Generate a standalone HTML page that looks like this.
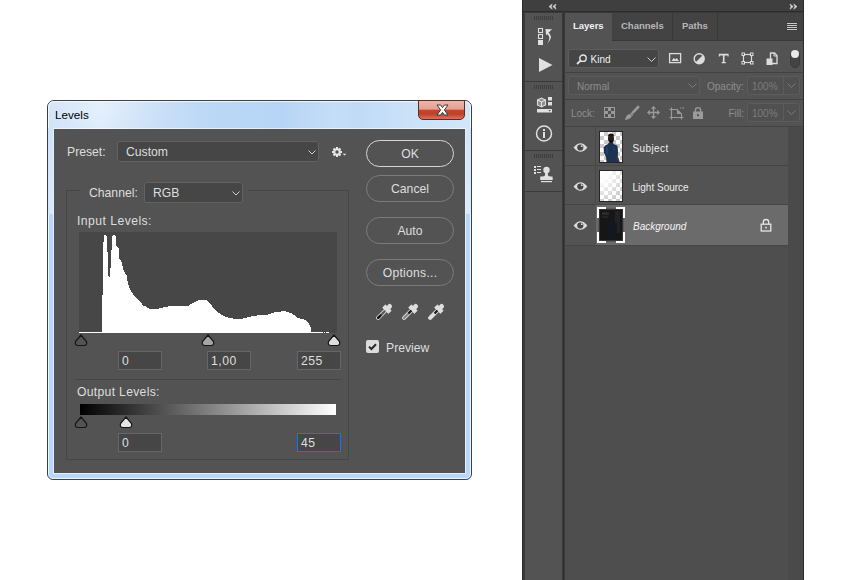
<!DOCTYPE html>
<html><head><meta charset="utf-8">
<style>
*{margin:0;padding:0;box-sizing:border-box}
html,body{width:850px;height:580px;overflow:hidden;background:#fff;font-family:"Liberation Sans",sans-serif}
.a{position:absolute}
.t{position:absolute;white-space:nowrap;line-height:16px;color:#dedede;font-size:12.2px}
.lt{position:absolute;white-space:nowrap;line-height:16px;font-size:10px;color:#e0e0e0}
</style></head><body>

<!-- ============ LEVELS DIALOG ============ -->
<div class="a" style="left:47px;top:100px;width:425px;height:380px;border:1px solid #3a3f47;border-radius:7px 7px 6px 6px;background:#b9d7fa;overflow:hidden">
  <!-- title bar gradient -->
  <div class="a" style="left:0;top:0;width:423px;height:28px;background:linear-gradient(90deg,#cfe2f8 0%,#d5e7fa 8%,#dcebfb 12%,#cde1f8 22%,#bcd8f6 38%,#b6d5f6 55%,#c5ddf7 68%,#c0daf7 73%,#cde3f9 88%,#d3e6f9 100%)"></div>
  <div class="a" style="left:-30px;top:-30px;width:160px;height:70px;border-radius:50%;background:radial-gradient(ellipse at center,rgba(255,255,255,.25) 0%,rgba(255,255,255,0) 70%)"></div>
  <div class="a" style="left:0;top:0;width:423px;height:378px;border:1px solid rgba(255,255,255,.75);border-radius:6px 6px 5px 5px"></div>
</div>
<div class="t" style="left:55px;top:107px;color:#000;font-size:11.7px">Levels</div>
<!-- close button -->
<div class="a" style="left:418px;top:100px;width:47px;height:20px;border:1px solid #5e2a24;border-radius:0 0 5px 5px;background:linear-gradient(180deg,#ecb6ab 0%,#e6a092 45%,#c8432f 52%,#c03f2b 72%,#d67360 100%)"></div>
<svg class="a" style="left:434px;top:103px" width="17" height="14" viewBox="0 0 17 14"><path d="M3 2 L6.6 2 L8.5 4.6 L10.4 2 L14 2 L10.4 7 L14 12 L10.4 12 L8.5 9.4 L6.6 12 L3 12 L6.6 7 Z" fill="#fff" stroke="#3b3b3b" stroke-width="1" stroke-linejoin="round"/></svg>

<div class="a" style="left:48px;top:128px;width:5px;height:86px;background:linear-gradient(180deg,#cfe3f9,#d8e9fb)"></div>
<div class="a" style="left:466px;top:128px;width:5px;height:86px;background:linear-gradient(180deg,#d2e5f9,#dcebfb)"></div>
<!-- content -->
<div class="a" style="left:53px;top:128px;width:413px;height:346px;background:#fff;opacity:.6"></div>
<div class="a" style="left:54px;top:129px;width:411px;height:344px;background:#535353"></div>

<!-- Preset -->
<div class="t" style="left:67px;top:143.5px">Preset:</div>
<div class="a" style="left:117px;top:141px;width:202px;height:21px;background:#464646;border:1px solid #626262;border-radius:3px"></div>
<div class="t" style="left:126px;top:143.5px">Custom</div>
<svg class="a" style="left:307.5px;top:149.5px" width="9" height="6"><path d="M0.5 0.5 L4 4 L7.5 0.5" fill="none" stroke="#cfcfcf" stroke-width="1"/></svg>
<!-- gear -->
<svg class="a" style="left:331px;top:146px" width="18" height="12" viewBox="0 0 18 12">
  <g fill="#e6e6e6">
    <circle cx="6" cy="6" r="3.7"/>
    <rect x="5" y="1" width="2" height="10"/>
    <rect x="1" y="5" width="10" height="2"/>
    <rect x="5" y="1" width="2" height="10" transform="rotate(45 6 6)"/>
    <rect x="5" y="1" width="2" height="10" transform="rotate(-45 6 6)"/>
  </g>
  <circle cx="6" cy="6" r="1.7" fill="#535353"/>
  <path d="M11.5 7.8 L15.5 7.8 L13.5 9.6 Z" fill="#e6e6e6"/>
</svg>

<!-- buttons -->
<div class="a" style="left:366px;top:140px;width:88px;height:27px;border:1.5px solid #d6d6d6;border-radius:14px"></div>
<div class="t" style="left:366px;top:145.5px;width:88px;text-align:center">OK</div>
<div class="a" style="left:366px;top:175px;width:88px;height:27px;border:1px solid #7c7c7c;border-radius:14px"></div>
<div class="t" style="left:366px;top:180.5px;width:88px;text-align:center">Cancel</div>
<div class="a" style="left:366px;top:217px;width:88px;height:27px;border:1px solid #7c7c7c;border-radius:14px"></div>
<div class="t" style="left:366px;top:222.5px;width:88px;text-align:center">Auto</div>
<div class="a" style="left:366px;top:259px;width:88px;height:27px;border:1px solid #7c7c7c;border-radius:14px"></div>
<div class="t" style="left:366px;top:264.5px;width:88px;text-align:center;letter-spacing:.25px">Options...</div>

<!-- eyedroppers -->
<svg class="a" style="left:372px;top:300px" width="24" height="24" viewBox="0 0 24 24">
  <g transform="rotate(45 12 12)">
    <rect x="9.6" y="1.6" width="4.8" height="5.5" rx="2.4" fill="#dedede"/>
    <rect x="7.6" y="5.6" width="8.8" height="4.6" rx=".5" fill="#dedede"/>
    <rect x="9.9" y="9" width="4.2" height="13.4" rx="2.1" fill="#dedede"/>
    <rect x="10.9" y="10" width="2.2" height="11.4" rx="1.1" fill="#5a5a5a"/><rect x="10.9" y="15.8" width="2.2" height="5.6" rx="1.1" fill="#101010"/>
  </g>
</svg>
<svg class="a" style="left:398px;top:300px" width="24" height="24" viewBox="0 0 24 24">
  <g transform="rotate(45 12 12)">
    <rect x="9.6" y="1.6" width="4.8" height="5.5" rx="2.4" fill="#dedede"/>
    <rect x="7.6" y="5.6" width="8.8" height="4.6" rx=".5" fill="#dedede"/>
    <rect x="9.9" y="9" width="4.2" height="13.4" rx="2.1" fill="#dedede"/>
    <rect x="10.9" y="10" width="2.2" height="11.4" rx="1.1" fill="#8a8a8a"/><rect x="10.9" y="10" width="2.2" height="4.2" fill="#151515"/>
  </g>
</svg>
<svg class="a" style="left:424px;top:300px" width="24" height="24" viewBox="0 0 24 24">
  <g transform="rotate(45 12 12)">
    <rect x="9.6" y="1.6" width="4.8" height="5.5" rx="2.4" fill="#dedede"/>
    <rect x="7.6" y="5.6" width="8.8" height="4.6" rx=".5" fill="#dedede"/>
    <rect x="9.9" y="9" width="4.2" height="13.4" rx="2.1" fill="#dedede"/>
    <rect x="10.9" y="10" width="2.2" height="4" fill="#151515"/>
  </g>
</svg>
<!-- preview -->
<div class="a" style="left:366px;top:340px;width:13px;height:13px;background:#dcdcdc;border-radius:2px"></div>
<svg class="a" style="left:366px;top:340px" width="13" height="13"><path d="M3 6.6 L5.4 9 L10 4.2" fill="none" stroke="#262626" stroke-width="2"/></svg>
<div class="t" style="left:386px;top:339.5px">Preview</div>

<!-- group box -->
<div class="a" style="left:66px;top:190px;width:283px;height:270px;border:1px solid #464646"></div>
<div class="a" style="left:80px;top:185px;width:168px;height:10px;background:#535353"></div>
<div class="t" style="left:89px;top:184.5px">Channel:</div>
<div class="a" style="left:144px;top:182px;width:99px;height:21px;background:#464646;border:1px solid #626262;border-radius:3px"></div>
<div class="t" style="left:153px;top:184.5px">RGB</div>
<svg class="a" style="left:231.5px;top:190.5px" width="9" height="6"><path d="M0.5 0.5 L4 4 L7.5 0.5" fill="none" stroke="#cfcfcf" stroke-width="1"/></svg>

<div class="t" style="left:77px;top:212.5px;letter-spacing:.45px">Input Levels:</div>
<!-- histogram -->
<div class="a" style="left:79px;top:232px;width:258px;height:101px;background:#474747"></div>
<svg class="a" style="left:0;top:0" width="850" height="580">
  <path fill="#fff" d="M79 333 V332 H80 V332 H81 V332 H82 V332 H83 V332 H84 V332 H85 V332 H86 V332 H87 V332 H88 V332 H89 V332 H90 V332 H91 V332 H92 V332 H93 V332 H94 V332 H95 V332 H96 V332 H97 V332 H98 V332 H99 V332 H100 V332 H101 V332 H102 V295 H103 V242 H104 V235 H105 V235 H106 V236 H107 V252 H108 V276 H109 V277 H110 V268 H111 V250 H112 V236 H113 V235 H114 V235 H115 V236 H116 V246 H117 V247 H118 V248 H119 V259 H120 V260 H121 V262 H122 V266 H123 V270 H124 V272 H125 V274 H126 V275 H127 V281 H128 V285 H129 V288 H130 V290 H131 V292 H132 V293 H133 V295 H134 V296 H135 V297 H136 V298 H137 V299 H138 V300 H139 V301 H140 V302 H141 V303 H142 V305 H143 V306 H144 V306 H145 V306 H146 V307 H147 V308 H148 V308 H149 V309 H150 V309 H151 V309 H152 V309 H153 V309 H154 V309 H155 V309 H156 V309 H157 V309 H158 V309 H159 V308 H160 V308 H161 V308 H162 V308 H163 V307 H164 V307 H165 V307 H166 V307 H167 V307 H168 V306 H169 V306 H170 V306 H171 V306 H172 V306 H173 V306 H174 V306 H175 V306 H176 V306 H177 V306 H178 V306 H179 V306 H180 V306 H181 V306 H182 V306 H183 V306 H184 V306 H185 V306 H186 V306 H187 V306 H188 V306 H189 V305 H190 V304 H191 V304 H192 V303 H193 V303 H194 V302 H195 V302 H196 V301 H197 V301 H198 V300 H199 V300 H200 V300 H201 V300 H202 V300 H203 V300 H204 V300 H205 V300 H206 V300 H207 V301 H208 V302 H209 V303 H210 V304 H211 V305 H212 V307 H213 V308 H214 V309 H215 V310 H216 V311 H217 V312 H218 V313 H219 V313 H220 V314 H221 V315 H222 V315 H223 V316 H224 V316 H225 V317 H226 V317 H227 V317 H228 V318 H229 V318 H230 V318 H231 V318 H232 V318 H233 V319 H234 V319 H235 V319 H236 V319 H237 V319 H238 V319 H239 V319 H240 V319 H241 V319 H242 V319 H243 V318 H244 V318 H245 V318 H246 V318 H247 V317 H248 V317 H249 V317 H250 V317 H251 V316 H252 V316 H253 V316 H254 V316 H255 V316 H256 V316 H257 V315 H258 V315 H259 V315 H260 V315 H261 V315 H262 V315 H263 V315 H264 V315 H265 V315 H266 V315 H267 V315 H268 V314 H269 V314 H270 V314 H271 V313 H272 V313 H273 V313 H274 V312 H275 V312 H276 V312 H277 V312 H278 V312 H279 V312 H280 V312 H281 V311 H282 V311 H283 V311 H284 V311 H285 V311 H286 V312 H287 V312 H288 V312 H289 V313 H290 V313 H291 V313 H292 V314 H293 V315 H294 V315 H295 V316 H296 V317 H297 V318 H298 V318 H299 V318 H300 V319 H301 V319 H302 V319 H303 V319 H304 V320 H305 V320 H306 V321 H307 V322 H308 V323 H309 V325 H310 V327 H311 V332 H312 V332 H313 V332 H314 V332 H315 V332 H316 V332 H317 V332 H318 V332 H319 V332 H320 V332 H321 V332 H322 V332 H323 V333 Z"/>
  <rect x="324" y="332" width="1" height="1" fill="#fff"/>
  <rect x="326" y="332" width="3" height="1" fill="#fff"/>
</svg>
<!-- input sliders -->
<svg class="a" style="left:0;top:0" width="850" height="580">
  <path d="M81 335 L86.5 341.5 Q87.5 345.5 84 345.5 L78 345.5 Q74.5 345.5 75.5 341.5 Z" fill="#535353" stroke="#151515" stroke-width="1.2"/>
  <path d="M208 335 L213.5 341.5 Q214.5 345.5 211 345.5 L205 345.5 Q201.5 345.5 202.5 341.5 Z" fill="#a5a5a5" stroke="#151515" stroke-width="1.2"/>
  <path d="M334 335 L339.5 341.5 Q340.5 345.5 337 345.5 L331 345.5 Q327.5 345.5 328.5 341.5 Z" fill="#dedede" stroke="#151515" stroke-width="1.2"/>
  <path d="M81 417 L86.5 423.5 Q87.5 427.5 84 427.5 L78 427.5 Q74.5 427.5 75.5 423.5 Z" fill="#535353" stroke="#151515" stroke-width="1.2"/>
  <path d="M126 417 L131.5 423.5 Q132.5 427.5 129 427.5 L123 427.5 Q119.5 427.5 120.5 423.5 Z" fill="#e6e6e6" stroke="#151515" stroke-width="1.2"/>
</svg>
<!-- input boxes -->
<div class="a" style="left:118px;top:351px;width:44px;height:19px;background:#464646;border:1px solid #666"></div>
<div class="t" style="left:122px;top:352.7px">0</div>
<div class="a" style="left:207px;top:351px;width:44px;height:19px;background:#464646;border:1px solid #666"></div>
<div class="t" style="left:211px;top:352.7px;letter-spacing:.5px">1,00</div>
<div class="a" style="left:297px;top:351px;width:44px;height:19px;background:#464646;border:1px solid #666"></div>
<div class="t" style="left:301px;top:352.7px;letter-spacing:.5px">255</div>

<div class="a" style="left:75px;top:379px;width:266px;height:1px;background:#454545"></div>
<div class="t" style="left:77px;top:383.5px;letter-spacing:.3px">Output Levels:</div>
<div class="a" style="left:80px;top:404px;width:256px;height:11px;background:linear-gradient(90deg,#000,#fff)"></div>
<div class="a" style="left:118px;top:433px;width:44px;height:19px;background:#464646;border:1px solid #666"></div>
<div class="t" style="left:122px;top:434.7px">0</div>
<div class="a" style="left:297px;top:433px;width:44px;height:19px;background:#464646;border:1px solid #1a73e8"></div>
<div class="t" style="left:301px;top:434.7px;letter-spacing:.5px">45</div>

<!-- ============ LAYERS PANEL ============ -->
<div class="a" style="left:522px;top:0;width:282px;height:580px;background:#3a3a3a;border-left:1px solid #2b2b2b;border-right:1px solid #2b2b2b"></div>
<!-- header bar -->
<div class="a" style="left:523px;top:0;width:280px;height:12px;background:#3f3f3f;border-bottom:1px solid #2c2c2c"></div>
<svg class="a" style="left:548px;top:3px" width="10" height="8"><path d="M1 3.6 L4.2 1 L3.2 3.6 L4.2 6.2 Z M4.8 3.6 L8 1 L7 3.6 L8 6.2 Z" fill="#d4d4d4" stroke="#d4d4d4" stroke-width=".6" stroke-linejoin="round"/></svg>
<svg class="a" style="left:789px;top:3px" width="10" height="8"><path d="M8 3.6 L4.8 1 L5.8 3.6 L4.8 6.2 Z M4.2 3.6 L1 1 L2 3.6 L1 6.2 Z" fill="#d4d4d4" stroke="#d4d4d4" stroke-width=".6" stroke-linejoin="round"/></svg>

<!-- tool column -->
<div class="a" style="left:525px;top:13px;width:37px;height:68px;background:#535353"></div>
<div class="a" style="left:525px;top:82px;width:37px;height:68px;background:#535353"></div>
<div class="a" style="left:525px;top:151px;width:37px;height:40px;background:#535353"></div>
<div class="a" style="left:525px;top:192px;width:37px;height:388px;background:#535353"></div>
<!-- grips -->
<svg class="a" style="left:534px;top:16px" width="19" height="4"><rect x="0" y="0" width="1" height="4" fill="#3d3d3d"/><rect x="2" y="0" width="1" height="4" fill="#3d3d3d"/><rect x="4" y="0" width="1" height="4" fill="#3d3d3d"/><rect x="6" y="0" width="1" height="4" fill="#3d3d3d"/><rect x="8" y="0" width="1" height="4" fill="#3d3d3d"/><rect x="10" y="0" width="1" height="4" fill="#3d3d3d"/><rect x="12" y="0" width="1" height="4" fill="#3d3d3d"/><rect x="14" y="0" width="1" height="4" fill="#3d3d3d"/><rect x="16" y="0" width="1" height="4" fill="#3d3d3d"/><rect x="18" y="0" width="1" height="4" fill="#3d3d3d"/></svg>
<svg class="a" style="left:534px;top:85px" width="19" height="4"><rect x="0" y="0" width="1" height="4" fill="#3d3d3d"/><rect x="2" y="0" width="1" height="4" fill="#3d3d3d"/><rect x="4" y="0" width="1" height="4" fill="#3d3d3d"/><rect x="6" y="0" width="1" height="4" fill="#3d3d3d"/><rect x="8" y="0" width="1" height="4" fill="#3d3d3d"/><rect x="10" y="0" width="1" height="4" fill="#3d3d3d"/><rect x="12" y="0" width="1" height="4" fill="#3d3d3d"/><rect x="14" y="0" width="1" height="4" fill="#3d3d3d"/><rect x="16" y="0" width="1" height="4" fill="#3d3d3d"/><rect x="18" y="0" width="1" height="4" fill="#3d3d3d"/></svg>
<svg class="a" style="left:534px;top:154px" width="19" height="4"><rect x="0" y="0" width="1" height="4" fill="#3d3d3d"/><rect x="2" y="0" width="1" height="4" fill="#3d3d3d"/><rect x="4" y="0" width="1" height="4" fill="#3d3d3d"/><rect x="6" y="0" width="1" height="4" fill="#3d3d3d"/><rect x="8" y="0" width="1" height="4" fill="#3d3d3d"/><rect x="10" y="0" width="1" height="4" fill="#3d3d3d"/><rect x="12" y="0" width="1" height="4" fill="#3d3d3d"/><rect x="14" y="0" width="1" height="4" fill="#3d3d3d"/><rect x="16" y="0" width="1" height="4" fill="#3d3d3d"/><rect x="18" y="0" width="1" height="4" fill="#3d3d3d"/></svg>
<!-- history icon -->
<svg class="a" style="left:536px;top:27px" width="18" height="20" viewBox="0 0 18 20">
  <rect x="2.5" y="1.5" width="4" height="4" fill="none" stroke="#e0e0e0" stroke-width="1.1"/>
  <rect x="2.5" y="7.5" width="4" height="4" fill="none" stroke="#e0e0e0" stroke-width="1.1"/>
  <rect x="2" y="13" width="5" height="5" fill="#e0e0e0"/>
  <path d="M9.5 2 L16 2.2 L10 8.2 Z" fill="#e0e0e0"/>
  <path d="M12 5.2 Q18.5 9.5 11 16.5 Q15.8 10 11 7 Z" fill="#e0e0e0"/>
</svg>
<!-- play -->
<svg class="a" style="left:538px;top:57px" width="16" height="16"><path d="M1 1 L14.5 8 L1 15 Z" fill="#e0e0e0"/></svg>
<!-- 3d/props icon -->
<svg class="a" style="left:536px;top:96px" width="18" height="18" viewBox="0 0 18 18">
  <path d="M1.5 4 L5.5 2 L9.5 4 L9.5 9 L5.5 11 L1.5 9 Z" fill="#8c8c8c" stroke="#e0e0e0" stroke-width="1.1"/>
  <path d="M1.5 4 L5.5 6 L9.5 4 M5.5 6 L5.5 11" fill="none" stroke="#e0e0e0" stroke-width="1.1"/>
  <rect x="12" y="1" width="4" height="3.5" fill="#e0e0e0"/>
  <rect x="12" y="6" width="4" height="3.5" fill="#e0e0e0"/>
  <rect x="1" y="13" width="15" height="3.5" fill="#e0e0e0"/>
  <path d="M12.5 14 L15 14 L13.75 15.5 Z" fill="#535353"/>
</svg>
<!-- info -->
<svg class="a" style="left:535px;top:125px" width="18" height="18" viewBox="0 0 18 18">
  <circle cx="9" cy="8.5" r="7.5" fill="none" stroke="#e0e0e0" stroke-width="1.5"/>
  <rect x="8" y="7" width="2" height="6" fill="#e0e0e0"/>
  <rect x="8" y="4" width="2" height="2" fill="#e0e0e0"/>
</svg>
<!-- clone source -->
<svg class="a" style="left:528px;top:160px" width="30" height="25" viewBox="528 160 30 25">
  <g fill="#e0e0e0">
    <rect x="534" y="166" width="2" height="2"/><rect x="537" y="166" width="4" height="1"/>
    <rect x="534" y="169" width="2" height="2"/><rect x="537" y="169" width="4" height="1"/>
    <rect x="534" y="172" width="2" height="2"/><rect x="537" y="172" width="4" height="1"/>
    <circle cx="546.5" cy="170" r="3.2"/>
    <path d="M545.2 172 L547.8 172 L548 175.5 Q549 176.3 551 176.5 L552.5 176.5 L552.8 180 L540.2 180 L540.2 176.5 L542 176.5 Q544 176.3 545 175.5 Z"/>
    <rect x="541" y="181" width="11" height="1.2"/>
  </g>
</svg>

<div class="a" style="left:563px;top:13px;width:1px;height:567px;background:#2f2f2f"></div>
<!-- panel body -->
<div class="a" style="left:565px;top:13px;width:238px;height:567px;background:#535353"></div>
<!-- tabs strip -->
<div class="a" style="left:612px;top:13px;width:191px;height:28px;background:#434343;border-bottom:1px solid #393939"></div>
<div class="a" style="left:672px;top:13px;width:1px;height:27px;background:#393939"></div>
<div class="a" style="left:717px;top:13px;width:1px;height:27px;background:#393939"></div>
<div class="lt" style="left:573px;top:17.5px;color:#f2f2f2;font-weight:bold;font-size:9.5px">Layers</div>
<div class="lt" style="left:621px;top:18px;color:#b8b8b8;font-weight:bold;font-size:9.5px">Channels</div>
<div class="lt" style="left:682px;top:18px;color:#b8b8b8;font-weight:bold;font-size:9.5px">Paths</div>
<svg class="a" style="left:786px;top:22px" width="12" height="9"><g fill="#3a3a3a" opacity=".6"><rect x="0" y="0" width="12" height="3"/><rect x="0" y="2" width="12" height="3"/><rect x="0" y="4" width="12" height="3"/><rect x="0" y="6" width="12" height="3"/></g><g fill="#cacaca"><rect x="1" y="1" width="10" height="1"/><rect x="1" y="3" width="10" height="1"/><rect x="1" y="5" width="10" height="1"/><rect x="1" y="7" width="10" height="1"/></g></svg>

<!-- filter row -->
<div class="a" style="left:568px;top:49px;width:91px;height:19px;background:#454545;border:1px solid #5d5d5d;border-radius:3px"></div>
<svg class="a" style="left:576px;top:53.5px" width="12" height="11"><circle cx="7" cy="4.2" r="3.2" fill="none" stroke="#e6e6e6" stroke-width="1.4"/><path d="M4.6 6.6 L1 10" stroke="#e6e6e6" stroke-width="1.8"/></svg>
<div class="lt" style="left:590.5px;top:51.8px;color:#f0f0f0">Kind</div>
<svg class="a" style="left:647px;top:57px" width="9" height="6"><path d="M0.5 0.5 L4.5 4.5 L8.5 0.5" fill="none" stroke="#cfcfcf" stroke-width="1"/></svg>
<!-- filter icons -->
<svg class="a" style="left:668px;top:52px" width="14" height="12"><rect x="1.6" y="1.6" width="11" height="9" fill="none" stroke="#dcdcdc" stroke-width="1.3"/><path d="M3.5 9 L5.8 5.8 L7.2 7.4 L8.7 6 L11 9 Z" fill="#dcdcdc"/></svg>
<svg class="a" style="left:693px;top:53px" width="13" height="12"><circle cx="6.2" cy="5.8" r="5" fill="none" stroke="#dcdcdc" stroke-width="1.4"/><path d="M9.8 2.3 A5 5 0 0 1 2.6 9.3 Z" fill="#dcdcdc"/></svg>
<svg class="a" style="left:718px;top:53px" width="12" height="11"><path d="M0.8 0.8 H10.6 V3.6 H9.6 V2.4 H6.5 V9 H7.8 V10.2 H3.6 V9 H4.9 V2.4 H1.8 V3.6 H0.8 Z" fill="#dcdcdc"/></svg>
<svg class="a" style="left:741px;top:52px" width="13" height="13"><rect x="2.5" y="2.5" width="8" height="8" fill="none" stroke="#dcdcdc" stroke-width="1.2"/><g fill="#dcdcdc"><rect x="0.5" y="0.5" width="3.5" height="3.5"/><rect x="9" y="0.5" width="3.5" height="3.5"/><rect x="0.5" y="9" width="3.5" height="3.5"/><rect x="9" y="9" width="3.5" height="3.5"/></g><g fill="#535353"><rect x="1.5" y="1.5" width="1.5" height="1.5"/><rect x="10" y="1.5" width="1.5" height="1.5"/><rect x="1.5" y="10" width="1.5" height="1.5"/><rect x="10" y="10" width="1.5" height="1.5"/></g></svg>
<svg class="a" style="left:766px;top:52px" width="12" height="14"><path d="M4.5 1 H8.5 L11 3.5 V11.5 H4.5 Z" fill="none" stroke="#dcdcdc" stroke-width="1.3"/><path d="M8 1 V4 H11" fill="none" stroke="#dcdcdc" stroke-width="1"/><rect x="0.5" y="6.5" width="6" height="6.5" fill="#dcdcdc"/></svg>
<div class="a" style="left:790px;top:50px;width:10px;height:18px;border-radius:5px;background:#444;border:1px solid #3a3a3a"></div>
<div class="a" style="left:791px;top:50px;width:8px;height:8px;border-radius:50%;background:#e8e8e8"></div>

<div class="a" style="left:565px;top:72px;width:238px;height:1px;background:#424242"></div>
<!-- blend row -->
<div class="a" style="left:568px;top:76px;width:132px;height:19px;border:1px solid #5c5c5c;border-radius:3px;background:#505050"></div>
<div class="lt" style="left:577px;top:79px;color:#8e8e8e">Normal</div>
<svg class="a" style="left:688px;top:83px" width="9" height="6"><path d="M0.5 0.5 L4.5 4.5 L8.5 0.5" fill="none" stroke="#7a7a7a" stroke-width="1"/></svg>
<div class="lt" style="left:707px;top:79px;color:#8e8e8e">Opacity:</div>
<div class="a" style="left:747px;top:76px;width:53px;height:19px;border:1px solid #5c5c5c;border-radius:3px;background:#505050"></div>
<div class="a" style="left:783px;top:77px;width:1px;height:17px;background:#5c5c5c"></div>
<div class="lt" style="left:752px;top:79px;color:#7c7c7c">100%</div>
<svg class="a" style="left:787px;top:83px" width="9" height="6"><path d="M0.5 0.5 L4.5 4.5 L8.5 0.5" fill="none" stroke="#7a7a7a" stroke-width="1"/></svg>

<div class="a" style="left:565px;top:99px;width:238px;height:1px;background:#424242"></div>
<!-- lock row -->
<div class="lt" style="left:571px;top:106px;color:#8e8e8e">Lock:</div>
<svg class="a" style="left:604px;top:107px" width="11" height="11"><rect x="0" y="0" width="11" height="11" fill="#9a9a9a"/><g fill="#515151"><rect x="1" y="1" width="3" height="3"/><rect x="7" y="1" width="3" height="3"/><rect x="4" y="4" width="3" height="3"/><rect x="1" y="7" width="3" height="3"/><rect x="7" y="7" width="3" height="3"/></g></svg>
<svg class="a" style="left:624px;top:105px" width="16" height="16"><path d="M14.2 2 L9 7.4" stroke="#9a9a9a" stroke-width="2.6" stroke-linecap="round"/><path d="M7.4 7.6 L9.4 9.6 L8.4 10.8 L6.2 8.8 Z" fill="#9a9a9a"/><path d="M5.8 9 Q2.2 9.6 1 15 Q6.2 14.6 8 11 Z" fill="#9a9a9a"/></svg>
<svg class="a" style="left:647px;top:106px" width="14" height="14"><path d="M6.5 2 V11 M2 6.5 H11" stroke="#9a9a9a" stroke-width="1.4"/><path d="M6.5 0 L9.2 2.8 H3.8 Z M6.5 13 L9.2 10.2 H3.8 Z M0 6.5 L2.8 3.8 V9.2 Z M13 6.5 L10.2 3.8 V9.2 Z" fill="#9a9a9a"/></svg>
<svg class="a" style="left:666px;top:104px" width="20" height="18" viewBox="666 104 20 18"><g stroke="#9a9a9a" stroke-width="1.2" fill="none"><path d="M671.5 109.5 H677 L681.5 114 V117.5 H671.5 Z"/><path d="M671.5 107.5 V109 M669.5 109.5 H671 M671.5 118 V119.5 M669.5 117.5 H671 M681.5 118 V119.5 M682 117.5 H683.5 M682.5 108.5 L683.5 107.5 M680.5 107.5 V108.5"/></g><path d="M677 109.5 V114 H681.5 Z" fill="#9a9a9a"/></svg>
<svg class="a" style="left:692px;top:106px" width="12" height="14"><path d="M3.4 6 V4.2 A2.6 2.6 0 0 1 8.6 4.2 V6" fill="none" stroke="#9a9a9a" stroke-width="1.4"/><rect x="1" y="5.5" width="10" height="7.5" fill="#9a9a9a"/><rect x="5" y="8.2" width="2" height="2" fill="#535353"/></svg>
<div class="lt" style="left:728.5px;top:106px;color:#8e8e8e">Fill:</div>
<div class="a" style="left:747px;top:103px;width:53px;height:19px;border:1px solid #5c5c5c;border-radius:3px;background:#505050"></div>
<div class="a" style="left:783px;top:104px;width:1px;height:17px;background:#5c5c5c"></div>
<div class="lt" style="left:752px;top:106px;color:#7c7c7c">100%</div>
<svg class="a" style="left:787px;top:110px" width="9" height="6"><path d="M0.5 0.5 L4.5 4.5 L8.5 0.5" fill="none" stroke="#7a7a7a" stroke-width="1"/></svg>

<!-- layer list -->
<div class="a" style="left:565px;top:126px;width:238px;height:454px;background:#4a4a4a;border-top:1px solid #424242"></div>
<div class="a" style="left:565px;top:127px;width:223px;height:39px;background:#535353;border-bottom:1px solid #454545"></div>
<div class="a" style="left:565px;top:166px;width:223px;height:39px;background:#535353;border-bottom:1px solid #454545"></div>
<div class="a" style="left:565px;top:205px;width:223px;height:41px;background:#535353;border-bottom:1px solid #464646"></div>
<div class="a" style="left:596px;top:205px;width:192px;height:40px;background:#6b6b6b"></div>
<div class="a" style="left:565px;top:246px;width:223px;height:334px;background:#4e4e4e"></div>
<div class="a" style="left:595px;top:127px;width:1px;height:78px;background:#484848"></div>

<!-- eyes -->
<svg class="a" style="left:573px;top:142px" width="15" height="11"><path d="M0.6 5.5 Q7.5 -3.2 14.4 5.5 Q7.5 14.2 0.6 5.5 Z" fill="#dcdcdc"/><circle cx="7.3" cy="5.5" r="3.1" fill="#474747"/><circle cx="8.7" cy="4.2" r="0.9" fill="#dcdcdc"/></svg>
<svg class="a" style="left:573px;top:181px" width="15" height="11"><path d="M0.6 5.5 Q7.5 -3.2 14.4 5.5 Q7.5 14.2 0.6 5.5 Z" fill="#dcdcdc"/><circle cx="7.3" cy="5.5" r="3.1" fill="#474747"/><circle cx="8.7" cy="4.2" r="0.9" fill="#dcdcdc"/></svg>
<svg class="a" style="left:573px;top:220px" width="15" height="11"><path d="M0.6 5.5 Q7.5 -3.2 14.4 5.5 Q7.5 14.2 0.6 5.5 Z" fill="#dcdcdc"/><circle cx="7.3" cy="5.5" r="3.1" fill="#474747"/><circle cx="8.7" cy="4.2" r="0.9" fill="#dcdcdc"/></svg>
<!-- thumb 1 subject -->
<div class="a" style="left:599px;top:131px;width:24px;height:32px;border:1px solid #262626;background-color:#fff;background-image:linear-gradient(45deg,#cbcbcb 25%,transparent 25%,transparent 75%,#cbcbcb 75%),linear-gradient(45deg,#cbcbcb 25%,transparent 25%,transparent 75%,#cbcbcb 75%);background-size:8px 8px;background-position:0 0,4px 4px"></div>
<svg class="a" style="left:600px;top:132px" width="22" height="30" viewBox="0 0 22 30">
  <path d="M8.5 10.5 L13 10.5 L13.5 12 Q16.5 12.5 17.5 14 L18 19 L17.8 24 L19.5 30 L6.5 30 L6 25 L4 21 L3.6 15.5 Q4.5 13 8 12 Z" fill="#1c3250"/>
  <path d="M6 15 L8 16 L8.5 22 L6.5 23 Z M13 14 L15 16 L14 21 Z" fill="#2a4a72" opacity=".7"/>
  <ellipse cx="11" cy="6.5" rx="3" ry="4.3" fill="#2a1e18"/>
  <path d="M7.8 4.5 Q8 1.6 11 1.5 Q14 1.6 14.2 4.5 L13 3.6 L9 3.6 Z" fill="#111"/>
  <path d="M9 8 L13.3 8 L12.5 11 L9.8 11 Z" fill="#141010"/>
  <path d="M17 23 L19 28 L18.5 30 L16.5 26 Z" fill="#5a3a28"/>
</svg>
<!-- thumb 2 light source -->
<div class="a" style="left:599px;top:170px;width:24px;height:32px;border:1px solid #262626;background-color:#fff;background-image:linear-gradient(45deg,#cbcbcb 25%,transparent 25%,transparent 75%,#cbcbcb 75%),linear-gradient(45deg,#cbcbcb 25%,transparent 25%,transparent 75%,#cbcbcb 75%);background-size:8px 8px;background-position:0 0,4px 4px"></div>
<div class="a" style="left:600px;top:171px;width:22px;height:30px;background:radial-gradient(ellipse 130% 110% at 0% 0%,rgba(255,255,255,1) 0%,rgba(255,255,255,.9) 35%,rgba(255,255,255,0) 100%)"></div>
<!-- thumb 3 background -->
<div class="a" style="left:598px;top:208px;width:26px;height:34px;background:#5a5a5a"></div>
<div class="a" style="left:599px;top:209px;width:24px;height:32px;background:#161616;border:1px solid #333"></div>
<svg class="a" style="left:600px;top:210px" width="22" height="30"><rect x="2" y="2" width="7" height="3" fill="#2a2a2a"/><rect x="2" y="6" width="6" height="2" fill="#242424"/><rect x="15" y="1" width="5" height="22" fill="#222"/><path d="M10 7 Q12 5.5 14 7 L14 11 L17 13 L17 28 L7 28 L7 13 L10 11 Z" fill="#121820"/></svg>
<svg class="a" style="left:596px;top:206px" width="30" height="38"><path d="M2 12 V2 H10 M20 2 H28 V12 M28 26 V36 H20 M10 36 H2 V26" fill="none" stroke="#fff" stroke-width="2"/></svg>
<!-- names -->
<div class="lt" style="left:632.5px;top:141.3px;color:#ececec;letter-spacing:.4px">Subject</div>
<div class="lt" style="left:632.5px;top:180.3px;color:#ececec">Light Source</div>
<div class="lt" style="left:633px;top:219.3px;color:#f4f4f4;font-style:italic">Background</div>
<!-- lock -->
<svg class="a" style="left:760px;top:218px" width="12" height="14"><path d="M3.3 6 V4.2 A2.7 2.7 0 0 1 8.7 4.2 V6" fill="none" stroke="#e6e6e6" stroke-width="1.3"/><rect x="1.2" y="6.2" width="9.6" height="6.8" fill="none" stroke="#e6e6e6" stroke-width="1.3"/><rect x="5.2" y="8.8" width="1.6" height="1.6" fill="#e6e6e6"/></svg>
</body></html>
